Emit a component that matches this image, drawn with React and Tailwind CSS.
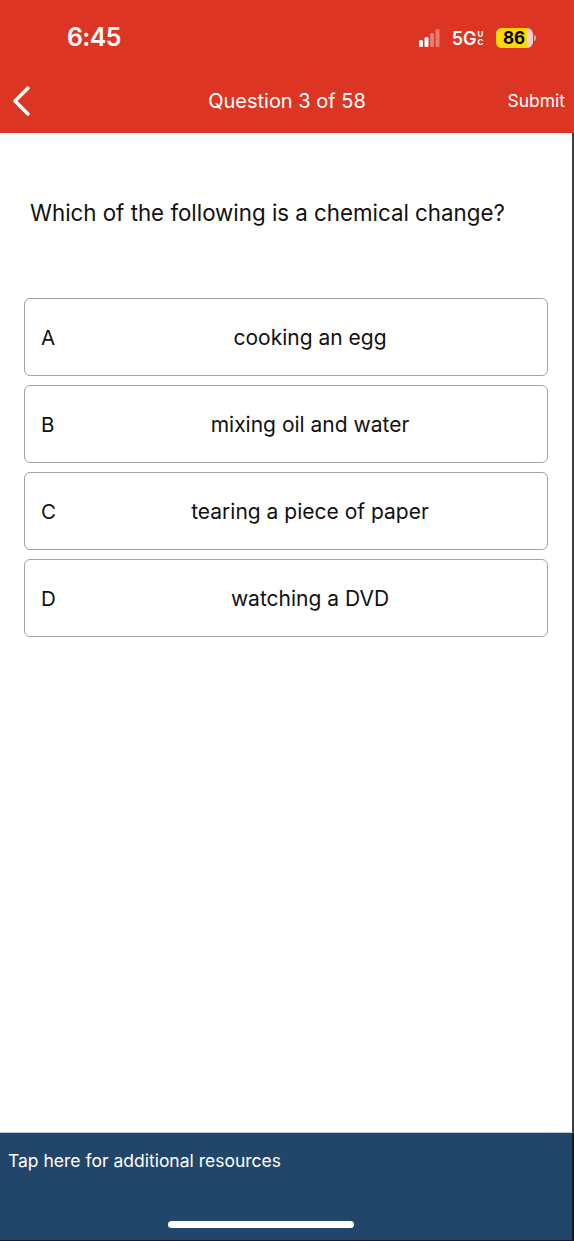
import React from 'react';

const OPTIONS = [
  { letter: 'A', text: 'cooking an egg' },
  { letter: 'B', text: 'mixing oil and water' },
  { letter: 'C', text: 'tearing a piece of paper' },
  { letter: 'D', text: 'watching a DVD' },
];

function SignalBars() {
  return (
    <svg width="22" height="20" viewBox="0 0 22 20" className="block">
      <rect x="0" y="12" width="4" height="7" rx="1.5" fill="#fff" />
      <rect x="5.5" y="9" width="4" height="10" rx="1.5" fill="#fff" />
      <rect x="11" y="5" width="4" height="14" rx="1.5" fill="rgba(255,255,255,0.35)" />
      <rect x="16.5" y="1" width="4" height="18" rx="1.5" fill="rgba(255,255,255,0.35)" />
    </svg>
  );
}

function Battery() {
  return (
    <div className="flex items-center">
      <div className="relative w-[37px] h-[20px] rounded-[6px] bg-[#f3cfc9] overflow-hidden">
        <div className="absolute inset-y-0 left-0 w-[86%] bg-[#FFD60A]" />
        <span className="relative flex h-full items-center justify-center text-[17px] font-bold text-black leading-none">
          86
        </span>
      </div>
      <div className="ml-[1.5px] w-[2px] h-[6px] rounded-r bg-[#f3cfc9]/70" />
    </div>
  );
}

export default function App() {
  return (
    <div
      className="w-[574px] min-h-[1241px] flex flex-col bg-white"
      style={{ fontFamily: 'Inter, "Noto Sans", Arial, sans-serif' }}
    >
      {/* Header */}
      <div className="h-[133px] bg-[#DD3523] flex flex-col text-white">
        <div className="h-[70px] flex items-center justify-between pl-[67px] pr-[38px] pt-[6px]">
          <span className="text-[25px] font-semibold tracking-tight">6:45</span>
          <div className="flex items-center gap-[12px]">
            <SignalBars />
            <span className="text-[18px] font-semibold flex items-center -ml-[1px]">
              5G
              <span className="flex flex-col text-[8px] leading-[8px] font-bold ml-[1px]">
                <span>U</span>
                <span>C</span>
              </span>
            </span>
            <Battery />
          </div>
        </div>
        <div className="relative flex-1 flex items-center justify-center">
          <svg width="22" height="32" viewBox="0 0 22 32" className="absolute left-[10px] top-[15px]">
            <path d="M18 3 L5 16 L18 29" fill="none" stroke="#fff" strokeWidth="3.5" strokeLinecap="round" strokeLinejoin="round" />
          </svg>
          <span className="text-[20px] -mt-[1px]">Question 3 of 58</span>
          <span className="absolute right-[9px] text-[17.5px]">Submit</span>
        </div>
      </div>

      {/* Body */}
      <div className="flex-1 border-r-2 border-[#3d3d3d] pt-[66px]">
        <p className="pl-[30px] text-[22.3px] leading-[28px] text-[#111]">
          Which of the following is a chemical change?
        </p>
        <div className="mt-[71px] px-[24px] flex flex-col gap-[9px]">
          {OPTIONS.map((o) => (
            <div
              key={o.letter}
              className="h-[78px] flex items-center rounded-[6px] border border-[#a3a3a3] pl-[16px] pt-[2px]"
            >
              <span className="w-[32px] text-[20.5px] text-[#111]">{o.letter}</span>
              <span className="flex-1 text-center text-[21px] text-[#111]">{o.text}</span>
            </div>
          ))}
        </div>
      </div>

      {/* Footer */}
      <div className="h-[109px] bg-[#22466A] border-t border-[#b9c3cf] border-r-2 border-r-[#0e1c2c] border-b border-b-[#0e1c2c] flex flex-col">
        <span className="pl-[8px] pt-[16px] text-[17.5px] leading-[24px] text-white">
          Tap here for additional resources
        </span>
        <div className="flex-1" />
        <div className="ml-[168px] mb-[12px] w-[186px] h-[7px] rounded-full bg-white" />
      </div>
    </div>
  );
}
